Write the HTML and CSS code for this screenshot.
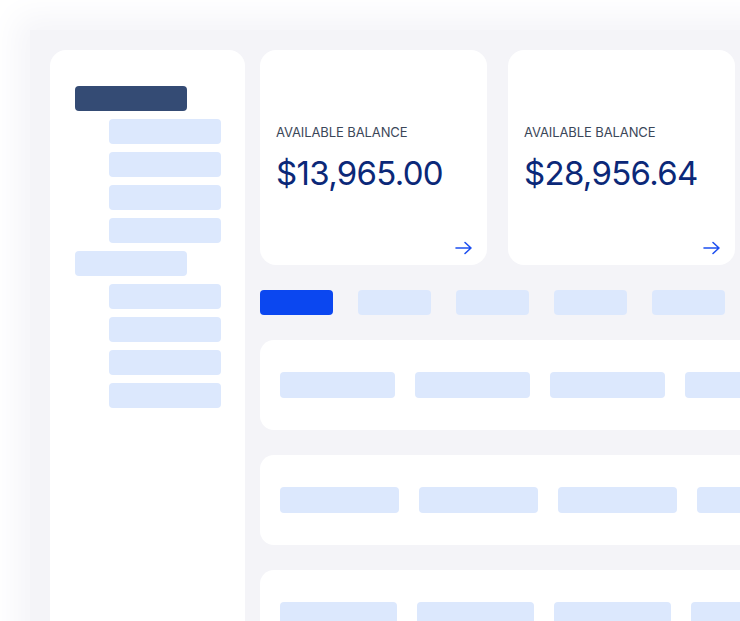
FILE: index.html
```html
<!DOCTYPE html>
<html>
<head>
<meta charset="utf-8">
<link rel="stylesheet" href="styles.css">
</head>
<body>
<div class="frame">
  <aside class="sidebar">
    <div class="nav-item dark"></div>
    <div class="nav-item sub"></div>
    <div class="nav-item sub"></div>
    <div class="nav-item sub"></div>
    <div class="nav-item sub"></div>
    <div class="nav-item"></div>
    <div class="nav-item sub"></div>
    <div class="nav-item sub"></div>
    <div class="nav-item sub"></div>
    <div class="nav-item sub"></div>
  </aside>
  <main class="main">
    <div class="cards">
      <div class="card">
        <div class="label">AVAILABLE BALANCE</div>
        <div class="amount">$13,965.00</div>
        <div class="arrow"><svg width="18" height="14" viewBox="0 0 18 14"><path d="M1 7H16M10 1.5L16 7L10 12.5" fill="none" stroke="#1d4ff0" stroke-width="1.6" stroke-linecap="round" stroke-linejoin="round"/></svg></div>
      </div>
      <div class="card">
        <div class="label">AVAILABLE BALANCE</div>
        <div class="amount">$28,956.64</div>
        <div class="arrow"><svg width="18" height="14" viewBox="0 0 18 14"><path d="M1 7H16M10 1.5L16 7L10 12.5" fill="none" stroke="#1d4ff0" stroke-width="1.6" stroke-linecap="round" stroke-linejoin="round"/></svg></div>
      </div>
    </div>
    <div class="tabs">
      <div class="tab active"></div>
      <div class="tab"></div>
      <div class="tab"></div>
      <div class="tab"></div>
      <div class="tab"></div>
    </div>
    <div class="rows">
      <div class="row r1"><div class="pill"></div><div class="pill"></div><div class="pill"></div><div class="pill"></div></div>
      <div class="row r2"><div class="pill"></div><div class="pill"></div><div class="pill"></div><div class="pill"></div></div>
      <div class="row r3"><div class="pill"></div><div class="pill"></div><div class="pill"></div><div class="pill"></div></div>
    </div>
  </main>
</div>
</body>
</html>
```
FILE: styles.css
```css
html, body {
  margin: 0;
  padding: 0;
  background: #ffffff;
  overflow: hidden;
  width: 740px;
  height: 621px;
}
body {
  font-family: Inter, "Noto Sans", sans-serif;
}
.frame {
  margin: 30px 0 0 30px;
  padding: 20px;
  width: 860px;
  height: 700px;
  background: #f4f4f8;
  box-shadow: 0 0 30px 14px #f5f5f9;
  display: flex;
  gap: 15px;
  box-sizing: border-box;
}
.sidebar {
  width: 195px;
  flex: none;
  background: #ffffff;
  border-radius: 16px;
  padding: 36px 0 0 25px;
  box-sizing: border-box;
  display: flex;
  flex-direction: column;
  gap: 8px;
}
.nav-item {
  width: 112px;
  height: 25px;
  border-radius: 4px;
  background: #dce8fd;
}
.nav-item.dark {
  background: #344b74;
}
.nav-item.sub {
  margin-left: 34px;
}
.main {
  flex: 1;
  display: flex;
  flex-direction: column;
}
.cards {
  display: flex;
  gap: 21px;
}
.card {
  width: 227px;
  height: 215px;
  background: #ffffff;
  border-radius: 16px;
  box-sizing: border-box;
  padding: 74px 14px 10px 16px;
  display: flex;
  flex-direction: column;
}
.label {
  font-size: 13px;
  color: #3b4759;
  letter-spacing: -0.1px;
  line-height: 16px;
}
.amount {
  margin-top: 13px;
  font-size: 33px;
  color: #0b2878;
  line-height: 40px;
  letter-spacing: -0.7px;
}
.arrow {
  margin-top: auto;
  align-self: flex-end;
  height: 14px;
}
.arrow svg { display: block; }
.tabs {
  margin-top: 25px;
  display: flex;
  gap: 25px;
}
.tab {
  width: 73px;
  height: 25px;
  border-radius: 4px;
  background: #dce8fd;
}
.tab.active {
  background: #0b47f0;
}
.rows {
  margin-top: 25px;
  display: flex;
  flex-direction: column;
  gap: 25px;
}
.row {
  height: 90px;
  background: #ffffff;
  border-radius: 14px 0 0 14px;
  padding: 0 0 0 20px;
  display: flex;
  align-items: center;
  gap: 20px;
}
.pill {
  height: 26px;
  border-radius: 4px;
  background: #dce8fd;
  flex: none;
}
.r1 .pill { width: 115px; }
.r2 .pill { width: 119px; }
.r3 .pill { width: 117px; }
```
